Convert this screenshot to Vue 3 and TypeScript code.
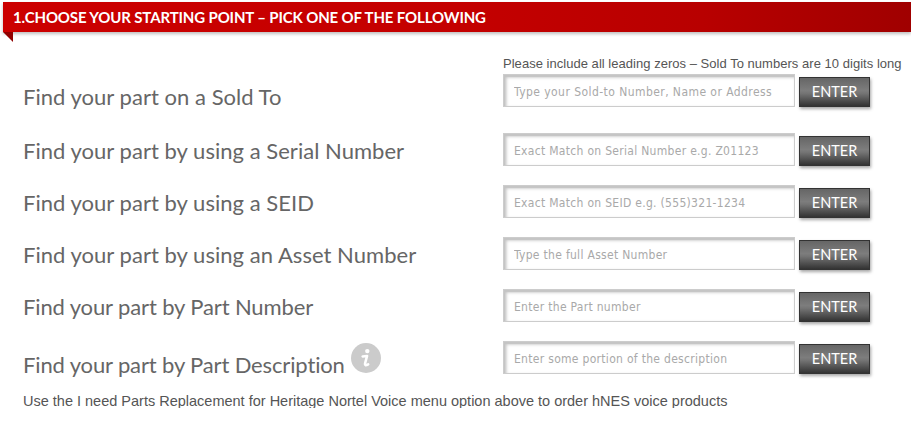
<script setup lang="ts">
interface SearchRow {
  id: string
  label: string
  placeholder: string
  info?: boolean
}

const rows: SearchRow[] = [
  { id: 'sold-to', label: 'Find your part on a Sold To', placeholder: 'Type your Sold-to Number, Name or Address' },
  { id: 'serial', label: 'Find your part by using a Serial Number', placeholder: 'Exact Match on Serial Number e.g. Z01123' },
  { id: 'seid', label: 'Find your part by using a SEID', placeholder: 'Exact Match on SEID e.g. (555)321-1234' },
  { id: 'asset', label: 'Find your part by using an Asset Number', placeholder: 'Type the full Asset Number' },
  { id: 'part', label: 'Find your part by Part Number', placeholder: 'Enter the Part number' },
  { id: 'description', label: 'Find your part by Part Description', placeholder: 'Enter some portion of the description', info: true },
]
</script>

<template>
  <main class="page">
    <h1 class="banner"><span class="banner-text">1.CHOOSE YOUR STARTING POINT – PICK ONE OF THE FOLLOWING</span></h1>
    <p class="note">Please include all leading zeros – Sold To numbers are 10 digits long</p>
    <form class="rows" @submit.prevent>
      <div v-for="row in rows" :key="row.id" class="row" :class="row.id">
        <label class="label" :for="row.id">
          <span class="label-text">{{ row.label }}</span>
          <svg v-if="row.info" class="info" viewBox="0 0 30 30" width="30" height="30">
            <circle cx="15" cy="15" r="15" fill="#cbcbcb" />
            <circle cx="16.3" cy="8.1" r="2.2" fill="#fff" />
            <path d="M11.6 13.4 L16.1 12.9 L14 20.6 Q13.4 23.6 17.2 21.4" fill="none" stroke="#fff" stroke-width="2.5" stroke-linejoin="round" stroke-linecap="round" />
          </svg>
        </label>
        <input :id="row.id" class="field" type="text" :placeholder="row.placeholder" />
        <button class="enter" type="submit">ENTER</button>
      </div>
    </form>
    <p class="footnote">Use the I need Parts Replacement for Heritage Nortel Voice menu option above to order hNES voice products</p>
  </main>
</template>

<style>
body {
  background: #fff;
  overflow: hidden;
}
</style>

<style scoped>
.page {
  box-sizing: border-box;
  width: 911px;
  height: 426px;
  padding: 2px 0 0 3px;
  overflow: hidden;
  font-family: "Liberation Sans", Arial, sans-serif;
  color: #555;
}
.banner {
  position: relative;
  box-sizing: border-box;
  height: 30px;
  margin: 0;
  padding-left: 10px;
  background: linear-gradient(to right, #cc0000 0%, #c40000 50%, #b80000 77%, #a00000 100%);
  box-shadow: 0 2px 3px rgba(0, 0, 0, 0.25);
  color: #fff;
  font: 700 15px/30px Lato, sans-serif;
  letter-spacing: -0.14px;
  white-space: nowrap;
}
.banner::after {
  content: "";
  position: absolute;
  left: 0;
  top: 30px;
  border-top: 10px solid #900000;
  border-left: 10px solid transparent;
}
.note {
  height: 18px;
  margin: 0;
  padding: 24px 0 0 500px;
  font-size: 13px;
  line-height: 15px;
  letter-spacing: 0.03px;
  white-space: nowrap;
}
.rows {
  padding-left: 20px;
}
.row {
  display: flex;
  align-items: flex-start;
  height: 52px;
}
.row.sold-to {
  height: 59px;
}
.label {
  display: flex;
  gap: 6px;
  box-sizing: border-box;
  width: 480px;
  padding-top: 3px;
  color: #666;
  font: 400 22px/30px Lato, sans-serif;
  letter-spacing: 0.03px;
  white-space: nowrap;
}
.sold-to .label {
  padding-top: 8px;
}
.part .label {
  letter-spacing: -0.13px;
}
.description .label {
  padding-top: 2px;
  letter-spacing: -0.14px;
}
.description .label-text {
  padding-top: 7px;
}
.field {
  box-sizing: border-box;
  width: 292px;
  height: 33px;
  margin: 0 4px 0 0;
  padding: 2px 10px 0;
  border: 1px solid #ccc;
  border-radius: 0;
  outline: none;
  background: #fff;
  box-shadow: inset 2px 2px 3px 0.5px #c4c4c4, inset 1px 2px 0 #ccc;
  color: #555;
  font: 12px "DejaVu Sans Condensed", "DejaVu Sans", sans-serif;
  letter-spacing: 0.3px;
}
.sold-to .field {
  letter-spacing: 0.44px;
}
.field::placeholder {
  color: #a9a9a9;
  opacity: 1;
}
.enter {
  box-sizing: border-box;
  width: 71px;
  height: 30px;
  margin: 3px 0 0;
  padding: 0 0 1px;
  border: 1px solid #333;
  border-radius: 0;
  background: linear-gradient(to bottom, #666 0%, #7d7d7d 45%, #747474 55%, #333 100%);
  box-shadow: 1px 2px 3px rgba(0, 0, 0, 0.35);
  color: #fff;
  font: 400 14.5px/26px Lato, sans-serif;
}
.footnote {
  height: 15px;
  margin: 0;
  padding-left: 20px;
  overflow: hidden;
  font-size: 14.5px;
  line-height: 17px;
  white-space: nowrap;
}
</style>
